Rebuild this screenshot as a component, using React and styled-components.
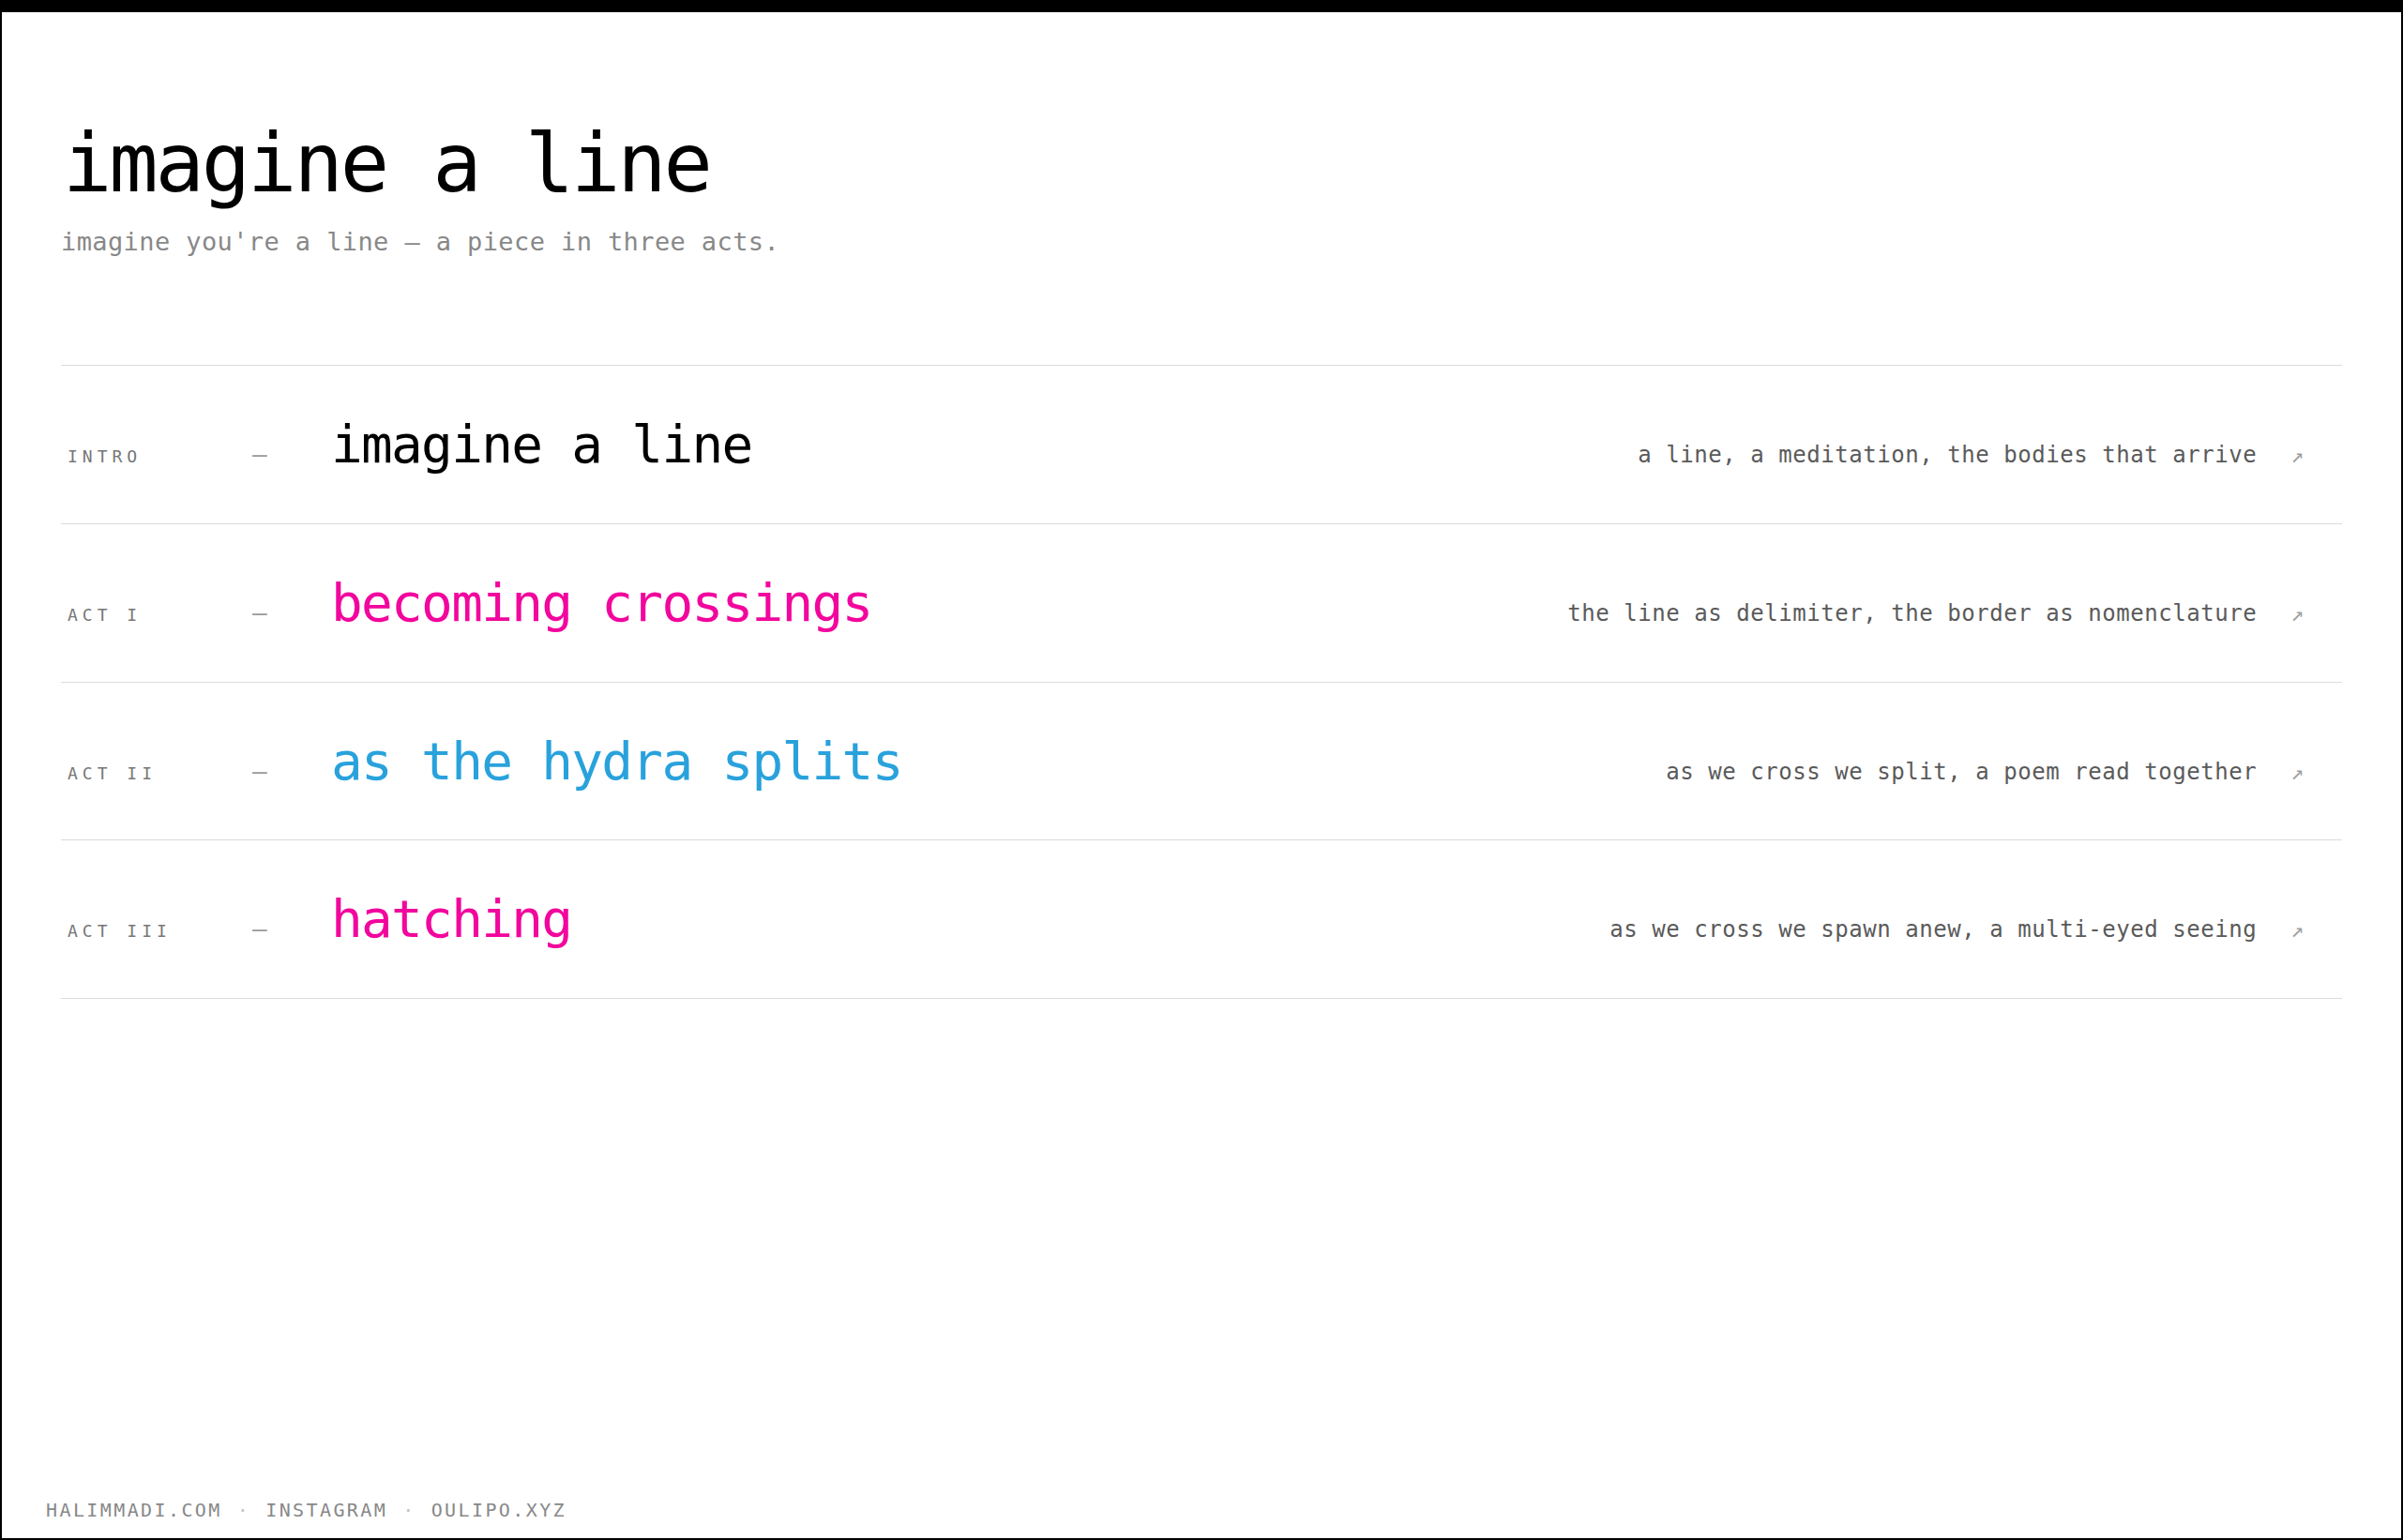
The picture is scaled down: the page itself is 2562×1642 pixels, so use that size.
import React from "react";
import styled, { createGlobalStyle } from "styled-components";

const GlobalStyle = createGlobalStyle`
  html, body {
    margin: 0;
    padding: 0;
    background: #fff;
  }

  body {
    font-family: "DejaVu Sans Mono", "Liberation Mono", monospace;
    color: #000;
  }
`;

const Frame = styled.div`
  min-height: 100vh;
  box-sizing: border-box;
  border: 2px solid #000;
  border-top-width: 13px;
  display: flex;
  flex-direction: column;
`;

const Main = styled.main`
  padding: 118px 63px 0;
`;

const Title = styled.h1`
  margin: 0 0 0 2px;
  font-size: 87px;
  font-weight: 400;
  line-height: 87px;
  letter-spacing: -3.1px;
  color: #000;
`;

const Subtitle = styled.p`
  margin: 22px 0 0;
  font-size: 27px;
  line-height: 36px;
  letter-spacing: 0.4px;
  color: #888;
`;

const List = styled.nav`
  margin-top: 113px;
  border-top: 1px solid #dcdcdc;
`;

const Row = styled.a`
  display: flex;
  align-items: baseline;
  padding: 50px 41px 50px 7px;
  border-bottom: 1px solid #dcdcdc;
  text-decoration: none;
  color: inherit;
`;

const Label = styled.span`
  flex: 0 0 197px;
  font-size: 18px;
  letter-spacing: 5px;
  color: #777;
`;

const Dash = styled.span`
  flex: 0 0 84px;
  font-size: 26px;
  color: #999;
`;

const ActTitle = styled.span`
  flex: 1;
  font-size: 56px;
  line-height: 67.8px;
  letter-spacing: -0.03em;
  color: ${(p) => p.$tone};
`;

const Blurb = styled.span`
  font-size: 24px;
  letter-spacing: 0.55px;
  color: #5a5a5a;
`;

const Arrow = styled.span`
  margin-left: 36px;
  font-size: 23px;
  color: #a0a0a0;
`;

const Footer = styled.footer`
  margin-top: auto;
  padding: 0 44px 18px 47px;
  display: flex;
  gap: 16px;
  font-size: 20px;
  line-height: 24px;
  letter-spacing: 2.4px;
  color: #888;
`;

const Sep = styled.span`
  color: #c4c4c4;
`;

const PINK = "#f2069d";
const BLUE = "#29a2dc";

const acts = [
  {
    label: "INTRO",
    title: "imagine a line",
    tone: "#000",
    blurb: "a line, a meditation, the bodies that arrive",
  },
  {
    label: "ACT I",
    title: "becoming crossings",
    tone: PINK,
    blurb: "the line as delimiter, the border as nomenclature",
  },
  {
    label: "ACT II",
    title: "as the hydra splits",
    tone: BLUE,
    blurb: "as we cross we split, a poem read together",
  },
  {
    label: "ACT III",
    title: "hatching",
    tone: PINK,
    blurb: "as we cross we spawn anew, a multi-eyed seeing",
  },
];

export default function App() {
  return (
    <>
      <GlobalStyle />
      <Frame>
        <Main>
          <Title>imagine a line</Title>
          <Subtitle>imagine you're a line — a piece in three acts.</Subtitle>

          <List>
            {acts.map((act) => (
              <Row key={act.label} href="#">
                <Label>{act.label}</Label>
                <Dash>—</Dash>
                <ActTitle $tone={act.tone}>{act.title}</ActTitle>
                <Blurb>{act.blurb}</Blurb>
                <Arrow>↗</Arrow>
              </Row>
            ))}
          </List>
        </Main>

        <Footer>
          <span>HALIMMADI.COM</span>
          <Sep>·</Sep>
          <span>INSTAGRAM</span>
          <Sep>·</Sep>
          <span>OULIPO.XYZ</span>
        </Footer>
      </Frame>
    </>
  );
}
